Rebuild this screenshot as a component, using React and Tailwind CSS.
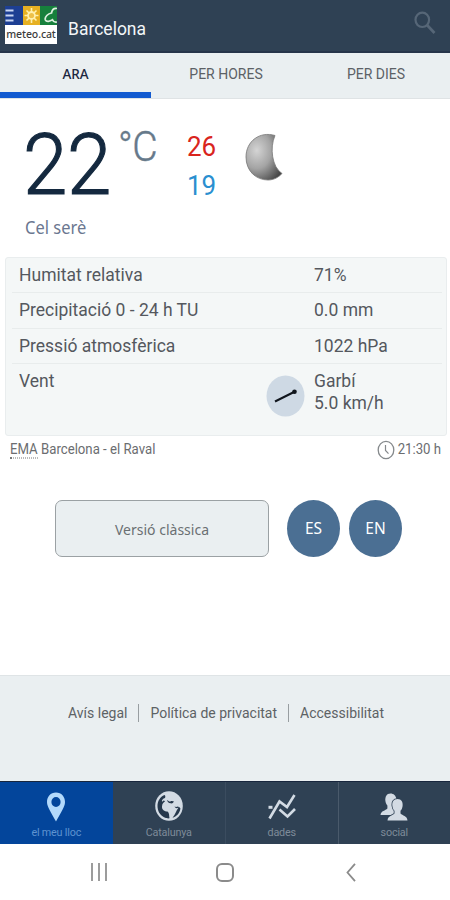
const tabs = [
  { label: 'ARA', active: true },
  { label: 'PER HORES' },
  { label: 'PER DIES' },
]

const rows = [
  { label: 'Humitat relativa', value: '71%' },
  { label: 'Precipitació 0 - 24 h TU', value: '0.0 mm' },
  { label: 'Pressió atmosfèrica', value: '1022 hPa' },
]

const links = ['Avís legal', 'Política de privacitat', 'Accessibilitat']

function Text({ className = '', children }) {
  return <span className={`inline-block whitespace-nowrap scale-y-[1.07] ${className}`}>{children}</span>
}

function Logo() {
  return (
    <div className="w-[52px] h-[38px] flex flex-col mt-[6px]">
      <svg className="block w-full h-[19px]" viewBox="0 0 52 19">
        <rect width="18" height="19" fill="#1d3f93" />
        <path d="M0.500 4.500h8M0.500 9.500h8M0.500 14.500h8" stroke="#c9d6f2" strokeWidth="2" />
        <rect x="18" width="17" height="19" fill="#e6b022" />
        <circle cx="26.5" cy="9.5" r="3.5" fill="#eec04a" stroke="#fff0b0" strokeWidth="1.8" />
        <path
          d="M26.5 2v4M26.5 13v4M19.500 9.5h4M29.500 9.5h4M21.500 4.500l2.500 2.500M31.500 4.500l-2.500 2.500M21.500 14.500l2.500-2.500M31.500 14.500l-2.500-2.500"
          stroke="#fff0b0"
          strokeWidth="1.6"
        />
        <rect x="35" width="17" height="19" fill="#16803c" />
        <path
          d="M52 2.500C48.500 2 47 4 46.500 7C43 7.500 39.500 11 40.300 13.800C41.500 16.300 45 15.300 47.500 13.800C48.500 16 50 16.500 52 16"
          fill="none"
          stroke="#dcefdf"
          strokeWidth="1.7"
        />
      </svg>
      <div className="h-[19px] bg-white flex items-center justify-center">
        <span className="font-['Noto_Sans'] font-medium text-[10.5px] leading-none tracking-[-0.1px] text-[#3c3c3c]">
          meteo.cat
        </span>
      </div>
    </div>
  )
}

function Header() {
  return (
    <header className="h-[53px] bg-[#2f4154] border-b-2 border-[#26354a] flex items-start pl-[5px] pr-[14px]">
      <Logo />
      <Text className="ml-[11px] mt-[17px] text-[17.500px] leading-6 text-[#f3f6f8]">Barcelona</Text>
      <svg className="ml-auto mt-[11px] w-[22px] h-[24px]" viewBox="0 0 22 24" fill="none" stroke="#566677">
        <ellipse cx="8.300" cy="8.800" rx="6.800" ry="7.200" strokeWidth="2.200" />
        <path d="M13 14l7.500 8" strokeWidth="2.800" />
      </svg>
    </header>
  )
}

function Tabs() {
  return (
    <nav className="h-[46px] grid grid-cols-3 bg-[#eaeff1] border-b border-[#dfe3e5]">
      {tabs.map((t) => (
        <div
          key={t.label}
          className={
            t.active
              ? "h-[45px] w-[151px] flex justify-center pt-[11px] border-b-[6px] border-[#125ad0] font-['Noto_Sans'] font-medium text-[13.500px] text-[#1c2740]"
              : 'h-[45px] flex justify-center pt-[11px] pl-[2px] text-[14px] text-[#5c6166]'
          }
        >
          <Text className="leading-5">{t.label}</Text>
        </div>
      ))}
    </nav>
  )
}

function Moon() {
  return (
    <svg className="w-[38px] h-[48px] ml-[28px] mt-[34px]" viewBox="0 0 38 48">
      <defs>
        <radialGradient id="moon" cx="0.3" cy="0.35" r="0.8">
          <stop offset="0" stopColor="#d4d4d4" />
          <stop offset="0.5" stopColor="#a4a4a4" />
          <stop offset="1" stopColor="#484848" />
        </radialGradient>
      </defs>
      <path
        d="M30 2.500C15-2 1 8 1 24C1 38 11 47 23 47C29 47 34 44 37 40.500C27 34 24.500 15 30 2.500Z"
        fill="url(#moon)"
        stroke="#777"
        strokeWidth="0.800"
      />
    </svg>
  )
}

function Current() {
  return (
    <section className="h-[158px]">
      <div className="flex h-[112px] pl-[23px]">
        <Text className="mt-[23px] w-[95px] text-[80px] leading-[86px] tracking-[-0.500px] font-light text-[#14293f] [-webkit-text-stroke:1.100px_#14293f]">
          22
        </Text>
        <Text className="mt-[26px] w-[60px] text-[39px] leading-[46px] tracking-[-0.500px] font-light text-[#66798a] [-webkit-text-stroke:0.400px_#66798a]">
          °C
        </Text>
        <div className="flex flex-col ml-[9px] pt-[28px] w-[30px] text-[26px]">
          <Text className="leading-[39px] text-[#d9251d]">26</Text>
          <Text className="leading-[39px] text-[#2a8fd0]">19</Text>
        </div>
        <Moon />
      </div>
      <Text className="ml-[25px] mt-[5px] font-['Noto_Sans'] text-[16.500px] leading-6 text-[#6b7790]">Cel serè</Text>
    </section>
  )
}

function Observations() {
  return (
    <section className="mx-[5px] mr-[3px] h-[179px] bg-[#f4f7f7] border border-[#e9edee] rounded-[3px] pl-[6px] pr-[4px] text-[17.500px] text-[#54585e]">
      {rows.map((r) => (
        <div key={r.label} className="h-[35.300px] flex items-center border-b border-[#e8ecec] pl-[7px]">
          <Text className="w-[295px] leading-6">{r.label}</Text>
          <Text className="leading-6">{r.value}</Text>
        </div>
      ))}
      <div className="flex items-start pl-[7px] pt-[5px]">
        <Text className="w-[247px] leading-6">Vent</Text>
        <svg className="w-[39px] h-[42px] mt-[6px]" viewBox="0 0 39 42">
          <ellipse cx="19.500" cy="21" rx="19" ry="20.500" fill="#ced9e4" />
          <path d="M9 26.500L28 17" stroke="#10151c" strokeWidth="2" />
          <circle cx="28.500" cy="16.800" r="2.300" fill="#10151c" />
        </svg>
        <div className="flex flex-col ml-[9px]">
          <Text className="leading-[22px] mt-[1px]">Garbí</Text>
          <Text className="leading-[22px]">5.0 km/h</Text>
        </div>
      </div>
    </section>
  )
}

function Station() {
  return (
    <div className="h-[28px] flex items-center pl-[10px] pr-[9px] text-[13.200px] text-[#6b6d70]">
      <Text className="leading-5">
        <span className="border-b border-dotted border-[#777]">EMA</span> Barcelona - el Raval
      </Text>
      <svg className="ml-auto w-[18px] h-[20px]" viewBox="0 0 18 20" fill="none" stroke="#85898c">
        <ellipse cx="9" cy="10" rx="7.800" ry="8.700" strokeWidth="1.300" />
        <path d="M8.500 5v5.500l3 3.200" strokeWidth="1.200" />
      </svg>
      <Text className="ml-[3px] leading-5">21:30 h</Text>
    </div>
  )
}

function Actions() {
  return (
    <div className="flex h-[211px] pt-[36px] pl-[55px] font-['Noto_Sans']">
      <button className="w-[214px] h-[57px] flex items-center justify-center rounded-[7px] border border-[#9ba1a4] bg-[#eaeff1] text-[14px] text-[#6a7073]">
        <Text className="mt-[1px]">Versió clàssica</Text>
      </button>
      {['ES', 'EN'].map((lang) => (
        <button
          key={lang}
          className="w-[53px] h-[57px] ml-[18px] last:ml-[9px] flex items-center justify-center rounded-[50%] bg-[#4b6f93] text-[15.500px] text-white"
        >
          <Text>{lang}</Text>
        </button>
      ))}
    </div>
  )
}

function Footer() {
  return (
    <footer className="h-[106px] bg-[#eaeff1] border-t border-[#dfe4e6] flex justify-center pt-[28px] pl-[2px] text-[14px] text-[#5d6265]">
      {links.map((l) => (
        <div key={l} className="h-[18px] flex items-center px-[11px] border-r border-[#989ea1] last:border-0">
          <Text>{l}</Text>
        </div>
      ))}
    </footer>
  )
}

function PinIcon() {
  return (
    <svg className="w-[20px] h-[30px]" viewBox="0 0 20 30">
      <path
        fillRule="evenodd"
        d="M10 0.500C4.500 0.500 1 4.700 1 10C1 15 5 20 10 29.500C15 20 19 15 19 10C19 4.700 15.500 0.500 10 0.500ZM10 5A4.600 5 0 1 1 10 15A4.600 5 0 1 1 10 5Z"
        fill="#b3d9fb"
      />
    </svg>
  )
}

function GlobeIcon() {
  return (
    <svg className="w-[28px] h-[30px]" viewBox="0 0 28 30">
      <ellipse cx="14" cy="15" rx="13.800" ry="14.700" fill="#d3dbe4" />
      <g fill="#26384c">
        <path d="M9.500 4C5 6 2.500 10 2.500 15C2.500 20 5 24 9 26.200C11.500 27.400 13 27.500 14.500 27.300C14 25 14.500 22 12.500 20.500C9.500 20.500 6.800 19 7 15.500C7.200 12.500 8.500 11.500 10 10.500C9 9 8 9.500 7 11C6.500 9 8 7.500 10 7C10.500 5.500 10.500 4.500 9.500 4Z" />
        <path d="M12 9C13.500 9.500 14 11 15.500 10.500C16.500 9.500 17 10.500 18.500 10C19 12 17 12.800 15.500 12.300C13.500 12 12.500 11 12 9Z" />
        <path d="M19.500 15.500C20.500 17 21.500 17.800 23.500 16.500C23 18 21.500 19 21 21C20 23 19 25 17.500 26.800C21.500 25.800 24.800 22 25.400 17.500C25 16.500 24 16 23 15.500C21.500 16 20.500 16 19.500 15.500Z" />
      </g>
    </svg>
  )
}

function ChartIcon() {
  return (
    <svg className="w-[28px] h-[26px]" viewBox="0 0 28 26" fill="none" stroke="#d3dbe4" strokeWidth="2.600">
      <path d="M1.500 24.500L11.500 7.500L19 13L26.500 1" />
      <path d="M11.500 15.500L19.500 22.500L27 15" />
      <path d="M0.500 13.300H4.500" strokeWidth="3" />
    </svg>
  )
}

function PeopleIcon() {
  return (
    <svg className="w-[28px] h-[28px]" viewBox="0 0 28 28" fill="#d3dbe4">
      <path d="M10.500 0.500C6.500 0.500 5 4 5.400 8C5.700 10 6.600 11.500 7.400 12.500V15.500C5.500 17.800 1 17.500 0.500 22H14V10L16.500 6.500C16 2.500 13.500 0.500 10.500 0.500Z" />
      <path
        d="M17.500 6C13.500 6 11.900 9 12.400 13C12.700 15.300 13.500 16.800 14.500 17.800V20.500C12.500 22.800 8 22.500 7.500 27.500H27.500C27 22.500 22.500 22.800 20.500 20.500V17.800C21.500 16.800 22.300 15.300 22.600 13C23.100 9 21.500 6 17.500 6Z"
        fill="#2f4154"
        stroke="#2f4154"
        strokeWidth="1.600"
      />
      <path d="M17.500 6C13.500 6 11.900 9 12.400 13C12.700 15.300 13.500 16.800 14.500 17.800V20.500C12.500 22.800 8 22.500 7.500 27.500H27.500C27 22.500 22.500 22.800 20.500 20.500V17.800C21.500 16.800 22.300 15.300 22.600 13C23.100 9 21.500 6 17.500 6Z" />
    </svg>
  )
}

function BottomNav() {
  return (
    <nav className="h-[63px] grid grid-cols-4 bg-[#2f4154] border-t border-[#18263d] text-[10.800px] text-[#7e8b99]">
      <div className="flex flex-col items-center pt-[10px] bg-[#03459b] text-[#5e93d0]">
        <PinIcon />
        <Text className="mt-[3px] leading-4 tracking-[-0.200px]">el meu lloc</Text>
      </div>
      <div className="flex flex-col items-center pt-[9px]">
        <GlobeIcon />
        <Text className="mt-[4px] leading-4 tracking-[-0.200px]">Catalunya</Text>
      </div>
      <div className="flex flex-col items-center pt-[12px] border-l border-[#3b4c5f]">
        <ChartIcon />
        <Text className="mt-[5px] leading-4 tracking-[-0.200px]">dades</Text>
      </div>
      <div className="flex flex-col items-center pt-[11px] border-l border-[#4a5a6b]">
        <PeopleIcon />
        <Text className="mt-[4px] leading-4 tracking-[-0.200px]">social</Text>
      </div>
    </nav>
  )
}

function SystemBar() {
  return (
    <div className="h-[56px] grid grid-cols-[198px_54px_198px] items-center justify-items-center bg-white text-[#8b8b8b]">
      <div className="flex gap-[5px] h-[18px] text-[#9c9c9c]">
        <div className="w-[2px] bg-current" />
        <div className="w-[2px] bg-current" />
        <div className="w-[2px] bg-current" />
      </div>
      <div className="w-[18px] h-[19px] border-2 border-current rounded-[6px]" />
      <svg className="w-[10px] h-[19px]" viewBox="0 0 10 19" fill="none" stroke="currentColor" strokeWidth="1.800">
        <path d="M9 0.800L1.500 9.500L9 18.200" />
      </svg>
    </div>
  )
}

export default function App() {
  return (
    <div className="w-[450px] h-[900px] bg-white overflow-hidden font-['Roboto',sans-serif]">
      <Header />
      <Tabs />
      <Current />
      <Observations />
      <Station />
      <Actions />
      <Footer />
      <BottomNav />
      <SystemBar />
    </div>
  )
}
